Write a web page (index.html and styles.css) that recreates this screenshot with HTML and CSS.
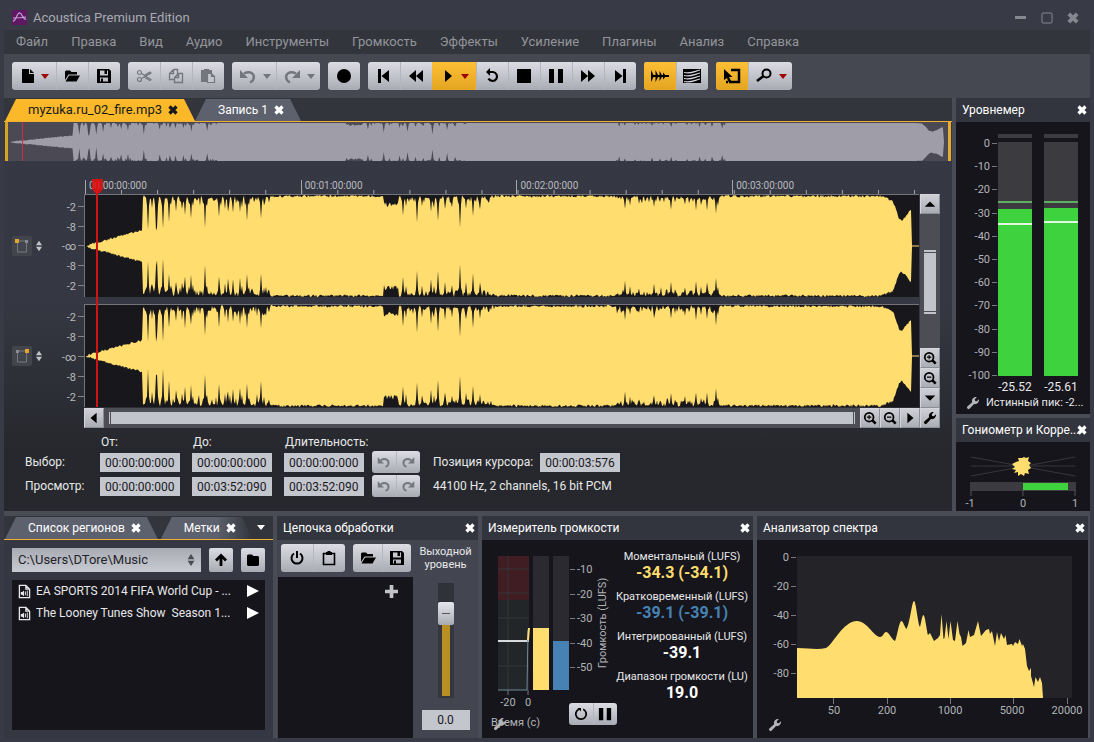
FILE: index.html
```
<!DOCTYPE html>
<html lang="ru">
<head>
  <meta charset="UTF-8">
  <meta name="viewport" content="width=device-width, initial-scale=1.0">
  <title>Acoustica Premium Edition</title>
  <link rel="stylesheet" href="styles.css">
</head>
<body>
  <svg class="sprite" aria-hidden="true">
    <symbol id="i-close" viewBox="0 0 10 10"><path d="M1.5 1.5l7 7M8.500 1.500l-7 7" stroke="currentColor" stroke-width="3.2"/></symbol>
    <symbol id="i-new" viewBox="0 0 16 16"><path d="M2 1h7v5h5v9H2zM10 1l4 4h-4z"/></symbol>
    <symbol id="i-open" viewBox="0 0 16 16"><path d="M1 12V3.500L2 2.500h4l1.500 1.500h5.500v2.500H4.500zM1.500 13.500L5 7.500h11l-3.500 6z"/></symbol>
    <symbol id="i-save" viewBox="0 0 16 16"><path fill-rule="evenodd" d="M1 1h12l2 2v12H1zM4 2.500v5h8v-5h-1V6H8.500V2.500zM4 9.500v4h8v-4z"/><path d="M5 10.500h2v4H5z"/></symbol>
    <symbol id="i-cut" viewBox="0 0 16 16"><g fill="none" stroke="currentColor" stroke-width="1.200"><circle cx="3.500" cy="4.500" r="2"/><circle cx="3.500" cy="11.500" r="2"/><path d="M5.500 5.500l3 1.800L14 4l1 1-9.500 5.500M8 9l6 3.500 1-1-5-3"/></g></symbol>
    <symbol id="i-copy" viewBox="0 0 16 16"><g fill="none" stroke="currentColor" stroke-width="1.300"><path d="M5.500 1.500h4v5M5.500 1.500l-4 4v6h5M5.500 1.500v4h-4M10.500 5.500h4v9h-8v-5zM10.500 5.500v4h-4"/></g></symbol>
    <symbol id="i-paste" viewBox="0 0 16 16"><path d="M1 2h3V1h5v1h3v3H7v9H1z"/><path d="M7.500 5.500h4l3 3v6h-7zM11.500 5.500v3h3" fill="#c3c5cd" stroke="currentColor" stroke-width="1.200"/></symbol>
    <symbol id="i-undo" viewBox="0 0 18 16"><path d="M5 5.500c6-3 12 0 9 6.500-.5 1-1.500 1.800-3 2.300" fill="none" stroke="currentColor" stroke-width="2.500"/><path d="M1 2v8h8z"/></symbol>
    <symbol id="i-redo" viewBox="0 0 18 16"><path d="M13 5.500c-6-3-12 0-9 6.500.5 1 1.500 1.800 3 2.300" fill="none" stroke="currentColor" stroke-width="2.500"/><path d="M17 2v8H9z"/></symbol>
    <symbol id="i-record" viewBox="0 0 16 16"><circle cx="8" cy="8" r="7"/></symbol>
    <symbol id="i-start" viewBox="0 0 16 16"><path d="M2 1h3v14H2zM13 2v12L5.500 8z"/></symbol>
    <symbol id="i-rew" viewBox="0 0 16 16"><path d="M8 2v12L1 8zM15 2v12L8 8z"/></symbol>
    <symbol id="i-play" viewBox="0 0 16 16"><path d="M5 2l7 6-7 6z"/></symbol>
    <symbol id="i-loop" viewBox="0 0 16 16"><path d="M4 4h5a4.500 4.500 0 1 1-4.500 6.500" fill="none" stroke="currentColor" stroke-width="2.200"/><path d="M6 0v8L2 4z"/></symbol>
    <symbol id="i-stop" viewBox="0 0 16 16"><path d="M1 1h14v14H1z"/></symbol>
    <symbol id="i-pause" viewBox="0 0 16 16"><path d="M1 1h5v14H1zM10 1h5v14h-5z"/></symbol>
    <symbol id="i-fwd" viewBox="0 0 16 16"><path d="M1 2v12l7-6zM8 2v12l7-6z"/></symbol>
    <symbol id="i-end" viewBox="0 0 16 16"><path d="M11 1h3v14h-3zM3 2v12l7.500-6z"/></symbol>
    <symbol id="i-wave" viewBox="0 0 20 16"><path d="M1 7h18v2H1zM1 2l3 6-3 6zM5.500 2l3 6-3 6zM9.500 3l3 5-3 5zM13 4.500L16 8l-3 3.500z"/></symbol>
    <symbol id="i-spectro" viewBox="0 0 20 16"><path d="M1 1h18v14H1z"/><path d="M2 4.500c7 1.500 10-1 16-2.500M2 7.500c7 1.500 10-1 16-2.500M2 10.500c7 1.500 10-1 16-2.500M2 13.500c7 1.500 10-1 16-2.500" fill="none" stroke="#d3d4da" stroke-width="1.100"/></symbol>
    <symbol id="i-select" viewBox="0 0 18 16"><path d="M8 2h8v12H6M3 14h2" fill="none" stroke="currentColor" stroke-width="2.500"/><path d="M1 1l8.500 8H6l2 4-2.500 1-1.500-4-3 2z"/></symbol>
    <symbol id="i-zoom" viewBox="0 0 18 16"><circle cx="11.500" cy="5.500" r="4" fill="none" stroke="currentColor" stroke-width="2"/><path d="M8.500 8L2 13" stroke="currentColor" stroke-width="2.600"/></symbol>
    <symbol id="i-zin" viewBox="0 0 16 16"><circle cx="7" cy="7" r="5" fill="none" stroke="currentColor" stroke-width="2"/><path d="M4.500 7h5M7 4.500v5" stroke="currentColor" stroke-width="1.200"/><path d="M10.500 10.500l4 4" stroke="currentColor" stroke-width="3"/></symbol>
    <symbol id="i-zout" viewBox="0 0 16 16"><circle cx="7" cy="7" r="5" fill="none" stroke="currentColor" stroke-width="2"/><path d="M4.500 7h5" stroke="currentColor" stroke-width="1.400"/><path d="M10.500 10.500l4 4" stroke="currentColor" stroke-width="3"/></symbol>
    <symbol id="i-up" viewBox="0 0 16 16"><path d="M2 11l6-6 6 6z"/></symbol>
    <symbol id="i-down" viewBox="0 0 16 16"><path d="M2 5l6 6 6-6z"/></symbol>
    <symbol id="i-left" viewBox="0 0 16 16"><path d="M11 2v12L4 8z"/></symbol>
    <symbol id="i-wrench" viewBox="0 0 16 16"><path d="M1.500 12L7 7C6 3.500 9 .5 12.300 1.300L10 3.600l.5 2 2 .4 2.300-2.200C15.500 7 12.500 10 9.200 9.200L4 14.600C2.500 16 .2 13.500 1.500 12z"/></symbol>
    <symbol id="i-arrow" viewBox="0 0 16 16"><path d="M8 14V4M3 8.500L8 3.500l5 5" fill="none" stroke="currentColor" stroke-width="2.800"/></symbol>
    <symbol id="i-folder" viewBox="0 0 16 16"><path d="M2 3.500L3 2.500h4L8.500 4H13l1 1v8l-1 1H3l-1-1z"/></symbol>
    <symbol id="i-power" viewBox="0 0 16 16"><path d="M5 3.500a5.500 5.500 0 1 0 6 0M8 1v7" fill="none" stroke="currentColor" stroke-width="2"/></symbol>
    <symbol id="i-clip" viewBox="0 0 16 16"><path d="M2.500 3.500h11v11h-11z" fill="none" stroke="currentColor" stroke-width="1.600"/><path d="M5 5V2h1.500V1h3v1H11v3z"/></symbol>
    <symbol id="i-audio" viewBox="0 0 14 16"><path d="M1.500 1.500h7l4 4v9h-11zM8.500 1.500v4h4" fill="none" stroke="currentColor" stroke-width="1.400"/><path d="M3 8.500h1.500L6.500 7v6l-2-1.500H3z"/><path d="M8 8v4M10 7v6" stroke="currentColor"/></symbol>
    <symbol id="i-reset" viewBox="0 0 16 16"><path d="M5.500 2.500a6 6 0 1 0 5 0" fill="none" stroke="currentColor" stroke-width="2"/><path d="M4 1h4v4z"/></symbol>
    <symbol id="i-spin" viewBox="0 0 8 14"><path d="M0 6l4-6 4 6zM0 8l4 6 4-6z"/></symbol>
  </svg>

  <div class="window">
    <header class="titlebar">
      <svg class="logo" viewBox="0 0 16 16"><rect width="16" height="16" fill="#5d1763"/><path d="M1 12C5 11 5 3 8 3s3 7 7 7M1 8.500c5 0 8 0 14-1" fill="none" stroke="#c69fd0" stroke-width="1.200"/></svg>
      <h1>Acoustica Premium Edition</h1>
      <div class="win-buttons">
        <button aria-label="Свернуть"><svg viewBox="0 0 12 12"><path d="M0 4h11v3H0z"/></svg></button>
        <button aria-label="Развернуть"><svg viewBox="0 0 12 12"><rect x="1" y="1" width="10" height="10" rx="1" fill="none" stroke="currentColor"/></svg></button>
        <button aria-label="Закрыть"><svg viewBox="0 0 12 12"><use href="#i-close"/></svg></button>
      </div>
    </header>

    <nav class="menu">
      <a href="#">Файл</a>
      <a href="#">Правка</a>
      <a href="#">Вид</a>
      <a href="#">Аудио</a>
      <a href="#">Инструменты</a>
      <a href="#">Громкость</a>
      <a href="#">Эффекты</a>
      <a href="#">Усиление</a>
      <a href="#">Плагины</a>
      <a href="#">Анализ</a>
      <a href="#">Справка</a>
    </nav>

    <div class="toolbar">
      <div class="group">
        <button class="drop" aria-label="Новый"><svg class="icon"><use href="#i-new"/></svg><i class="caret"></i></button>
        <button aria-label="Открыть"><svg class="icon"><use href="#i-open"/></svg></button>
        <button aria-label="Сохранить"><svg class="icon"><use href="#i-save"/></svg></button>
      </div>
      <div class="group dim">
        <button aria-label="Вырезать"><svg class="icon"><use href="#i-cut"/></svg></button>
        <button aria-label="Копировать"><svg class="icon"><use href="#i-copy"/></svg></button>
        <button aria-label="Вставить"><svg class="icon"><use href="#i-paste"/></svg></button>
      </div>
      <div class="group dim">
        <button class="drop" aria-label="Отменить"><svg class="icon wide"><use href="#i-undo"/></svg><i class="caret"></i></button>
        <button class="drop" aria-label="Повторить"><svg class="icon wide"><use href="#i-redo"/></svg><i class="caret"></i></button>
      </div>
      <div class="group">
        <button aria-label="Запись"><svg class="icon"><use href="#i-record"/></svg></button>
      </div>
      <div class="group">
        <button aria-label="В начало"><svg class="icon"><use href="#i-start"/></svg></button>
        <button aria-label="Назад"><svg class="icon"><use href="#i-rew"/></svg></button>
        <button class="drop on" aria-label="Воспроизвести"><svg class="icon"><use href="#i-play"/></svg><i class="caret"></i></button>
        <button aria-label="Повтор"><svg class="icon"><use href="#i-loop"/></svg></button>
        <button aria-label="Стоп"><svg class="icon"><use href="#i-stop"/></svg></button>
        <button aria-label="Пауза"><svg class="icon"><use href="#i-pause"/></svg></button>
        <button aria-label="Вперёд"><svg class="icon"><use href="#i-fwd"/></svg></button>
        <button aria-label="В конец"><svg class="icon"><use href="#i-end"/></svg></button>
      </div>
      <div class="group">
        <button class="on" aria-label="Волна"><svg class="icon wide"><use href="#i-wave"/></svg></button>
        <button aria-label="Спектр"><svg class="icon wide"><use href="#i-spectro"/></svg></button>
      </div>
      <div class="group">
        <button class="on" aria-label="Выделение"><svg class="icon wide"><use href="#i-select"/></svg></button>
        <button class="drop" aria-label="Масштаб"><svg class="icon wide"><use href="#i-zoom"/></svg><i class="caret"></i></button>
      </div>
    </div>

    <main class="workspace">
      <section class="editor">
        <div class="tabs file-tabs">
          <div class="tab active"><button>myzuka.ru_02_fire.mp3</button><button class="close" aria-label="Закрыть"><svg><use href="#i-close"/></svg></button></div>
          <div class="tab"><button>Запись 1</button><button class="close" aria-label="Закрыть"><svg><use href="#i-close"/></svg></button></div>
        </div>

        <div class="overview">
          <svg class="wave" viewBox="0 0 827 40" preserveAspectRatio="none"></svg>
          <span class="overview-cursor"></span>
        </div>

        <div class="timeline">
          <div class="ruler">
            <svg class="ticks" viewBox="0 0 835 14" preserveAspectRatio="none"></svg>
            <span>00:00:00:000</span>
            <span>00:01:00:000</span>
            <span>00:02:00:000</span>
            <span>00:03:00:000</span>
          </div>

          <div class="track-side first">
            <svg class="chan" viewBox="0 0 20 20"><path d="M5.500 5v11h9V5z" fill="none" stroke="#77787e"/><path d="M3 3h4v4H3z" fill="#e0a52c"/><path d="M13 4h3v3h-3z" fill="#8a8b90"/></svg>
            <svg class="spin"><use href="#i-spin"/></svg>
            <div class="scale"><span>-2</span><span>-8</span><span>-∞</span><span>-8</span><span>-2</span></div>
          </div>
          <div class="track first"><svg class="wave" viewBox="0 0 834 102" preserveAspectRatio="none"></svg></div>

          <div class="track-side second">
            <svg class="chan" viewBox="0 0 20 20"><path d="M5.500 5v11h9V5z" fill="none" stroke="#77787e"/><path d="M13 3h4v4h-4z" fill="#e0a52c"/><path d="M4 4h3v3H4z" fill="#8a8b90"/></svg>
            <svg class="spin"><use href="#i-spin"/></svg>
            <div class="scale"><span>-2</span><span>-8</span><span>-∞</span><span>-8</span><span>-2</span></div>
          </div>
          <div class="track second"><svg class="wave" viewBox="0 0 834 102" preserveAspectRatio="none"></svg></div>

          <div class="playhead"><svg viewBox="0 0 11 14"><path d="M0 0h11v10l-3 4H3l-3-4z"/></svg></div>

          <div class="vscroll">
            <button aria-label="Вверх"><svg><use href="#i-up"/></svg></button>
            <div class="lane"><div class="thumb"></div></div>
            <button aria-label="Увеличить"><svg><use href="#i-zin"/></svg></button>
            <button aria-label="Уменьшить"><svg><use href="#i-zout"/></svg></button>
            <button aria-label="Вниз"><svg><use href="#i-down"/></svg></button>
          </div>
          <div class="hscroll">
            <button aria-label="Влево"><svg><use href="#i-left"/></svg></button>
            <div class="lane"><div class="thumb"></div></div>
            <button aria-label="Увеличить"><svg><use href="#i-zin"/></svg></button>
            <button aria-label="Уменьшить"><svg><use href="#i-zout"/></svg></button>
            <button aria-label="Вправо"><svg><use href="#i-play"/></svg></button>
            <button aria-label="Настройки"><svg><use href="#i-wrench"/></svg></button>
          </div>
        </div>

        <div class="range">
          <span></span><span>От:</span><span>До:</span><span>Длительность:</span><span></span><span></span>

          <label for="selFrom">Выбор:</label>
          <input id="selFrom" value="00:00:00:000">
          <input aria-label="Выбор до" value="00:00:00:000">
          <input aria-label="Длительность выбора" value="00:00:00:000">
          <div class="group small dim">
            <button aria-label="Отменить"><svg class="icon"><use href="#i-undo"/></svg></button>
            <button aria-label="Повторить"><svg class="icon"><use href="#i-redo"/></svg></button>
          </div>
          <div class="position"><label for="cursorPos">Позиция курсора:</label><input id="cursorPos" value="00:00:03:576"></div>

          <label for="viewFrom">Просмотр:</label>
          <input id="viewFrom" value="00:00:00:000">
          <input aria-label="Просмотр до" value="00:03:52:090">
          <input aria-label="Длительность просмотра" value="00:03:52:090">
          <div class="group small dim">
            <button aria-label="Отменить"><svg class="icon"><use href="#i-undo"/></svg></button>
            <button aria-label="Повторить"><svg class="icon"><use href="#i-redo"/></svg></button>
          </div>
          <div class="position">44100 Hz, 2 channels, 16 bit PCM</div>
        </div>
      </section>

      <aside class="side">
        <section class="panel levels">
          <header><h2>Уровнемер</h2><button class="close" aria-label="Закрыть"><svg><use href="#i-close"/></svg></button></header>
          <svg class="chart" id="levels" viewBox="0 0 134 274">
            <g fill="#3b3b40"><path d="M42 12h34v4H42zM88 12h34v4H88zM42 20h34v68H42zM88 20h34v67H88z"/></g>
            <g fill="#3fd23f"><path d="M42 87h34v167H42zM88 86h34v168H88z"/></g>
            <path d="M42 79h34v2H42zM88 79h34v2H88z" fill="#5fae62"/>
            <path d="M42 101h34v2H42zM88 99h34v2H88z" fill="#e0f7df"/>
            <text class="num" x="59" y="269" text-anchor="middle">-25.52</text>
            <text class="num" x="105" y="269" text-anchor="middle">-25.61</text>
          </svg>
          <footer><button class="tool" aria-label="Настройки"><svg><use href="#i-wrench"/></svg></button><span>Истинный пик: -2...</span></footer>
        </section>

        <section class="panel gonio">
          <header><h2>Гониометр и Корре...</h2><button class="close" aria-label="Закрыть"><svg><use href="#i-close"/></svg></button></header>
          <svg class="chart" viewBox="0 0 134 69">
            <path d="M15 15l104 19M15 34L119 15M15 24h104" stroke="#37373d"/>
            <path d="M60 20l3-1-1-3 4 0 2-1 2 1 3-1-1 4 3 2-2 2 2 3-3 2 1 4-4-1-1 3-3-2-3 2 0-4-4 1 2-3-4-1 3-2-3-3z" fill="#ffdd6e"/>
            <path d="M14 40h106v9H14z" fill="#3b3b40"/>
            <path d="M67 41h45v7H67z" fill="#3fd23f"/>
            <path d="M15 48v6M67 48v6M119 48v6" stroke="#55565c"/>
            <g text-anchor="middle"><text x="14" y="65">-1</text><text x="67" y="65">0</text><text x="119" y="65">1</text></g>
          </svg>
        </section>
      </aside>
    </main>

    <div class="bottom">
      <section class="regions">
        <div class="tabs">
          <div class="tab"><button>Список регионов</button><button class="close" aria-label="Закрыть"><svg><use href="#i-close"/></svg></button></div>
          <div class="tab fade"><button>Метки</button><button class="close" aria-label="Закрыть"><svg><use href="#i-close"/></svg></button></div>
          <button class="more" aria-label="Ещё"><i class="caret"></i></button>
        </div>
        <div class="path-row">
          <div class="picker">
            <select aria-label="Папка"><option>C:\Users\DTore\Music</option></select>
            <svg><use href="#i-spin"/></svg>
          </div>
          <button aria-label="Вверх"><svg class="icon"><use href="#i-arrow"/></svg></button>
          <button aria-label="Папка"><svg class="icon"><use href="#i-folder"/></svg></button>
        </div>
        <ul class="files">
          <li><svg class="note"><use href="#i-audio"/></svg><span>EA SPORTS 2014 FIFA World Cup - ...</span><button aria-label="Воспроизвести"></button></li>
          <li><svg class="note"><use href="#i-audio"/></svg><span>The Looney Tunes Show  Season 1...</span><button aria-label="Воспроизвести"></button></li>
        </ul>
      </section>

      <section class="panel chain">
        <header><h2>Цепочка обработки</h2><button class="close" aria-label="Закрыть"><svg><use href="#i-close"/></svg></button></header>
        <div class="chain-body">
          <div class="chain-main">
            <div class="chain-tools">
              <div class="group">
                <button aria-label="Включить"><svg class="icon"><use href="#i-power"/></svg></button>
                <button aria-label="Буфер"><svg class="icon"><use href="#i-clip"/></svg></button>
              </div>
              <div class="group narrow">
                <button aria-label="Открыть"><svg class="icon"><use href="#i-open"/></svg></button>
                <button aria-label="Сохранить"><svg class="icon"><use href="#i-save"/></svg></button>
              </div>
            </div>
            <div class="slots"><button aria-label="Добавить"><svg viewBox="0 0 14 14"><path d="M5 0h4v5h5v4H9v5H5V9H0V5h5z"/></svg></button></div>
          </div>
          <div class="output">
            <label for="outLevel">Выходной уровень</label>
            <input type="range" id="outLevel" min="0" max="100" value="79">
            <input class="value" aria-label="Уровень" value="0.0">
          </div>
        </div>
      </section>

      <section class="panel loudness">
        <header><h2>Измеритель громкости</h2><button class="close" aria-label="Закрыть"><svg><use href="#i-close"/></svg></button></header>
        <div class="loud-body">
          <div class="loud-graph">
            <svg class="chart" id="loud" viewBox="0 0 134 198">
              <path d="M16 16h31v134H16z" fill="#232629"/>
              <path d="M16 16h31v44H16z" fill="#3f1d22"/>
              <path d="M16 29h31M16 53h31M16 78h31M16 126h31M26 16v134" stroke="#34353a"/>
              <path d="M16 101h31" stroke="#d9dadd" stroke-width="2"/>
              <path d="M16 150h29l1-60" fill="none" stroke="#6d8a99"/>
              <path d="M46 100l1-12" stroke="#ffdd6e" stroke-width="2"/>
              <path d="M51 16h16v134H51zM71 16h16v134H71z" fill="#2c2a31"/>
              <path d="M51 88h16v62H51z" fill="#ffdd6e"/>
              <path d="M71 101h16v49H71z" fill="#4682b4"/>
              <path d="M26 150v5M46 150v5" stroke="#77787e"/>
              <g text-anchor="middle"><text x="26" y="166">-20</text><text x="46" y="166">0</text></g>
              <text transform="translate(124 83) rotate(-90)" text-anchor="middle">Громкость (LUFS)</text>
              <text x="9" y="186">Время (c)</text>
            </svg>
            <button class="tool" aria-label="Настройки"><svg><use href="#i-wrench"/></svg></button>
          </div>
          <dl>
            <dt>Моментальный (LUFS)</dt><dd class="yellow">-34.3 (-34.1)</dd>
            <dt>Кратковременный (LUFS)</dt><dd class="blue">-39.1 (-39.1)</dd>
            <dt>Интегрированный (LUFS)</dt><dd>-39.1</dd>
            <dt>Диапазон громкости (LU)</dt><dd>19.0</dd>
          </dl>
          <div class="group small loud-buttons">
            <button aria-label="Сброс"><svg class="icon"><use href="#i-reset"/></svg></button>
            <button aria-label="Пауза"><svg class="icon"><use href="#i-pause"/></svg></button>
          </div>
        </div>
      </section>

      <section class="panel spectrum">
        <header><h2>Анализатор спектра</h2><button class="close" aria-label="Закрыть"><svg><use href="#i-close"/></svg></button></header>
        <svg class="chart" id="spectrum" viewBox="0 0 331 198">
          <path d="M40 16h275v142H40z" fill="#232328"/>
          <path fill="#ffdd6e" d="M40 108C52 108 60 110 69 108C75 106 86 81 100 81C110 81 117 97 123 97C126 97 127 92 129 92C132 92 135 100 138 101C140 98 142 81 144.500 81C146 81 148 88 149.500 89C153 83 155 61 157 61C159 61 161 86 163 87C164 84 165 75 166.500 75C168 75 170 92 171 95L173 93L177 101L181 98L183 95L184.500 74L186.500 99L187.500 98L189.500 81L191.500 99L193.500 81L196 100L198 101L200.500 81L202.500 94L204 97L205.500 106L209 103L211.500 90L213 97L217 95L221 81L224 96L229 90L232 89L233 94L235 91L238 106L240 92L242 101L244 93L247 99L248.500 95L250 105L255 104L256 106L258 102L261 104L262.500 99L265 106L266 104L268 109L270 126L272 131L274 128V136L277 147L278.500 137L281 142L283 137L285 143L286 158H40z"/>
          <g stroke="#77787e"><path d="M76.500 158v6M130.500 158v6M193.500 158v6M256.500 158v6M310.500 158v6"/></g>
          <g text-anchor="middle"><text x="77" y="174">50</text><text x="130" y="174">200</text><text x="193" y="174">1000</text><text x="255" y="174">5000</text><text x="310" y="174">20000</text></g>
        </svg>
        <button class="tool" aria-label="Настройки"><svg><use href="#i-wrench"/></svg></button>
      </section>
    </div>
  </div>

  <script src="script.js"></script>
</body>
</html>
```
FILE: styles.css
```
* {
  box-sizing: border-box;
}

body {
  margin: 0;
  background: #31333d;
  color: #e8e8ea;
  font: 12px/16px Roboto, "Liberation Sans", sans-serif;
}

h1, h2, dl, dd, ul {
  margin: 0;
  padding: 0;
  font-weight: normal;
}

button {
  padding: 0;
  border: none;
  background: none;
  color: inherit;
  font: inherit;
  white-space: nowrap;
  cursor: pointer;
}

svg {
  display: block;
  fill: currentColor;
}

.sprite {
  display: none;
}

.window {
  display: flex;
  flex-direction: column;
  min-height: 100vh;
  padding: 0 4px 4px;
  background: #383a46;
}

/* title and menu */
.titlebar {
  display: flex;
  align-items: center;
  gap: 6px;
  height: 30px;
  padding: 5px 11px 0 8px;
  color: #a9aab1;
}

.titlebar h1 {
  font-size: 13px;
}

.logo {
  width: 15px;
  height: 15px;
}

.win-buttons {
  display: flex;
  gap: 14px;
  margin-left: auto;
  color: #85868f;
}

.win-buttons svg {
  width: 12px;
  height: 12px;
}

.menu {
  display: flex;
  gap: 23px;
  height: 24px;
  padding: 0 12px;
  background: #32353c;
  font-size: 13px;
  line-height: 24px;
}

.menu a {
  color: #94959b;
  text-decoration: none;
}

/* toolbar */
.toolbar {
  display: flex;
  gap: 8px;
  height: 44px;
  padding: 8px;
  background: #454851;
}

.group {
  display: flex;
  height: 28px;
  border-radius: 3px;
  overflow: hidden;
  background: linear-gradient(#dcdde3, #a9abb4);
  color: #000;
}

.group button {
  display: flex;
  flex: none;
  align-items: center;
  justify-content: center;
  width: 32px;
}

.group button + button {
  box-shadow: inset 1px 0 #b4b6be;
}

.group .drop {
  width: 44px;
  gap: 5px;
}

.group button.on {
  background: linear-gradient(#fcbf35, #e4a521);
  box-shadow: none;
}

.dim {
  color: #74767d;
}

.icon {
  width: 16px;
  height: 16px;
}

.icon.wide {
  width: 20px;
}

.caret {
  border: 4px solid transparent;
  border-top: 5px solid #a00000;
  border-bottom: none;
}

.dim .caret {
  border-top-color: #74767d;
}

.group.small {
  height: 22px;
}

.group.small button {
  width: 24px;
}

.group.small .icon {
  width: 14px;
  height: 14px;
}

/* tabs */
.tabs {
  display: flex;
  gap: 3px;
  height: 24px;
  padding-left: 1px;
  border-bottom: 1px solid #f0b030;
  background: #32353c;
}

.tab {
  display: flex;
  flex: none;
  align-items: center;
  gap: 6px;
  height: 22px;
  margin-top: 1px;
  padding: 0 17px 0 23px;
  background: #5d616d;
  color: #fff;
  clip-path: polygon(11px 0, calc(100% - 11px) 0, 100% 100%, 0 100%);
}

.tab.active {
  background: #fbb829;
  color: #17181c;
  font-size: 13px;
}

.tab.fade {
  background: linear-gradient(to right, #5d616d 60%, #32353c);
}

.close {
  flex: none;
}

.close svg {
  width: 10px;
  height: 10px;
}

/* editor */
.workspace {
  display: flex;
  gap: 4px;
  padding-bottom: 5px;
  background: #494c55;
}

.editor {
  flex: 1;
  min-width: 0;
  background: linear-gradient(#363944 0, #353842 50%, #26282d 85%);
}

.file-tabs {
  gap: 0;
}

.overview {
  position: relative;
  height: 39px;
  padding: 1px 4px 0 0;
  border-left: 3px solid #d9a520;
  border-right: 3px solid #e6ae2c;
  margin: 0 1px;
  background: #4a4954;
  color: #9f9ea8;
}

.wave {
  width: 100%;
  height: 100%;
}

.overview-cursor {
  position: absolute;
  top: 0;
  bottom: 0;
  left: 14px;
  width: 1px;
  background: #d22a44;
}

.timeline {
  position: relative;
  display: grid;
  grid-template-columns: 80px 1fr 20px;
  grid-template-rows: 33px 103px 7px 104px 20px;
  padding-right: 12px;
}

.ruler {
  position: relative;
  grid-area: 1 / 2;
  display: grid;
  grid-template-columns: 216fr 216fr 216fr 188fr;
  align-items: end;
  padding-left: 1px;
}

.ruler span {
  height: 14px;
  padding-left: 3px;
  border-left: 1px solid #a5a6aa;
  color: #b9babf;
  font-size: 10px;
  line-height: 12px;
}

.ticks {
  position: absolute;
  left: 0;
  bottom: 0;
  width: 100%;
  height: 14px;
}

.track-side {
  display: flex;
  align-items: center;
  padding-left: 8px;
}

.track-side.first {
  grid-area: 2 / 1;
}

.track-side.second {
  grid-area: 4 / 1;
}

.chan {
  width: 20px;
  height: 20px;
  border-radius: 2px;
  background: #43454d;
}

.spin {
  width: 6px;
  height: 12px;
  margin-left: 4px;
  color: #c3c4c8;
}

.scale {
  display: flex;
  flex: 1;
  flex-direction: column;
  justify-content: space-around;
  height: 100%;
  padding-top: 4px;
  color: #b9babf;
  font-size: 11px;
  text-align: right;
}

.scale span::after {
  content: "";
  display: inline-block;
  width: 6px;
  height: 1px;
  margin-left: 2px;
  background: #808187;
  vertical-align: 4px;
}

.track {
  height: 103px;
  border-top: 1px solid #73747a;
  border-left: 1px solid #73747a;
  margin-right: 1px;
  background: #17171c;
  color: #ffdd6e;
}

.track.first {
  grid-area: 2 / 2;
}

.track.second {
  grid-area: 4 / 2;
}

.playhead {
  position: absolute;
  z-index: 2;
  top: 18px;
  left: 92px;
  height: 228px;
  border-left: 2px solid #d01412;
  color: #e3110f;
}

.playhead svg {
  width: 11px;
  height: 14px;
  margin-left: -6px;
  opacity: 0.85;
}

.vscroll {
  grid-area: 2 / 3 / 5 / 4;
  display: flex;
  flex-direction: column;
  background: #4d4e55;
}

.hscroll {
  grid-area: 5 / 2 / 6 / 4;
  display: flex;
  background: #4d4e55;
}

.vscroll button,
.hscroll button {
  display: grid;
  place-items: center;
  flex: none;
  width: 20px;
  height: 20px;
  border: 1px solid #8c8e95;
  border-top-color: #d5d6db;
  border-left-color: #d5d6db;
  background: linear-gradient(#cfd0d6, #abadb5);
  color: #000;
}

.vscroll button svg,
.hscroll button svg {
  width: 14px;
  height: 14px;
}

.lane {
  display: flex;
  flex: 1;
}

.vscroll .lane {
  flex-direction: column;
  padding: 35px 4px 33px;
}

.hscroll .lane {
  padding: 4px;
}

.thumb {
  flex: 1;
  background: #c2c4cb;
}

.vscroll .thumb {
  border-top: 4px double #4d4e55;
  border-bottom: 4px double #4d4e55;
}

.hscroll .thumb {
  border-left: 3px double #4d4e55;
  border-right: 3px double #4d4e55;
}

.range {
  display: grid;
  grid-template-columns: 63px 80px 80px 80px 48px auto;
  grid-template-rows: 20px 20px 20px;
  align-items: center;
  justify-content: start;
  gap: 4px 12px;
  padding: 0 0 15px 21px;
}

.range > span {
  align-self: end;
  padding-left: 1px;
  line-height: 12px;
  white-space: nowrap;
}

.range .group {
  width: 48px;
  margin-left: -4px;
}

input {
  width: 80px;
  height: 19px;
  padding: 2px 5px 0;
  border: none;
  background: #c4c6ce;
  color: #17181c;
  font: inherit;
}

.position {
  display: flex;
  align-items: center;
  gap: 7px;
  margin-left: -3px;
}

/* side panels */
.side {
  display: flex;
  flex: none;
  flex-direction: column;
  gap: 4px;
  width: 134px;
}

.panel {
  display: flex;
  flex-direction: column;
  min-width: 0;
  background: #15151b;
}

.panel header {
  display: flex;
  align-items: center;
  justify-content: space-between;
  height: 24px;
  padding: 0 3px 0 6px;
  background: #32353d;
  color: #fff;
  white-space: nowrap;
}

.panel h2 {
  min-width: 0;
  font-size: 12px;
}

.levels {
  height: 316px;
}

.gonio {
  flex: 1;
}

.chart {
  width: 100%;
  fill: #b3b4b8;
  font-size: 11px;
}

.chart .num {
  fill: #e8e8ea;
  font-size: 12px;
}

.levels footer {
  display: flex;
  gap: 6px;
  padding-left: 10px;
  margin-top: -1px;
  font-size: 11px;
  white-space: nowrap;
}

.tool {
  color: #b3b4b8;
}

.tool svg {
  width: 14px;
  height: 14px;
}

/* bottom row */
.bottom {
  display: grid;
  flex: 1;
  grid-template-columns: 269fr 201fr 271fr 331fr;
  gap: 4px;
  padding-right: 2px;
  background: #494c55;
}

.regions {
  display: flex;
  flex-direction: column;
  min-width: 0;
  padding-bottom: 8px;
  background: #353843;
}

.more {
  margin: 0 8px 0 auto;
}

.more .caret {
  display: block;
  border-top-color: #fff;
}

.path-row {
  display: flex;
  gap: 8px;
  padding: 8px;
}

.path-row button {
  display: grid;
  place-items: center;
  width: 24px;
  height: 24px;
  border-radius: 2px;
  background: linear-gradient(#dcdde3, #a9abb4);
  color: #000;
}

.picker {
  position: relative;
  flex: 1;
}

.picker select {
  width: 100%;
  height: 24px;
  padding: 0 6px;
  border: none;
  border-radius: 0;
  appearance: none;
  background: linear-gradient(#a9abb4, #c9cbd2);
  color: #222328;
  font: inherit;
  font-size: 13px;
}

.picker svg {
  position: absolute;
  top: 6px;
  right: 6px;
  width: 8px;
  height: 12px;
  color: #4a4b51;
}

.files {
  flex: 1;
  margin: 0 8px;
  background: #15151b;
  list-style: none;
}

.files li {
  display: flex;
  align-items: center;
  gap: 5px;
  height: 22px;
  padding: 0 6px;
  white-space: pre;
}

.files span {
  flex: 1;
}

.files .note {
  width: 13px;
  height: 15px;
}

.files button {
  border: 6px solid transparent;
  border-left: 12px solid #fff;
  border-right: none;
}

.chain-body {
  display: flex;
  flex: 1;
  background: #434651;
}

.chain-main {
  display: flex;
  flex: 1;
  flex-direction: column;
}

.chain-tools {
  display: flex;
  gap: 8px;
  padding: 4px 0 5px 4px;
}

.narrow button {
  width: 29px;
}

.slots {
  flex: 1;
  padding: 8px 15px;
  margin-left: 1px;
  background: #15151b;
}

.slots button {
  display: block;
  margin-left: auto;
  color: #c3c4c8;
}

.slots svg {
  width: 13px;
  height: 13px;
}

.output {
  display: flex;
  flex: none;
  flex-direction: column;
  align-items: center;
  width: 65px;
  padding-top: 5px;
  text-align: center;
  line-height: 13px;
}

.output label {
  width: 54px;
  font-size: 11px;
}

.output input[type="range"] {
  appearance: none;
  width: 16px;
  height: 115px;
  padding: 0;
  margin: 12px 0;
  background: linear-gradient(to right, #35373f 4px, #b98f24 4px 12px, #35373f 12px);
  writing-mode: vertical-lr;
  direction: rtl;
}

.output input[type="range"]::-webkit-slider-runnable-track {
  background: linear-gradient(#30323a 25px, transparent 25px calc(100% - 2px), #35373f calc(100% - 2px));
}

.output input[type="range"]::-webkit-slider-thumb {
  appearance: none;
  width: 16px;
  height: 23px;
  border-radius: 2px;
  background: linear-gradient(transparent 11px, #55565c 11px 12px, transparent 12px) center / 8px 23px no-repeat, linear-gradient(#e6e7ec, #a9abb4);
}

.output .value {
  width: 48px;
  height: 20px;
  padding: 0;
  text-align: center;
}

.loud-body {
  position: relative;
  display: flex;
  flex: 1;
}

.loud-graph {
  position: relative;
  flex: none;
  width: 134px;
}

.loud-graph .tool {
  position: absolute;
  bottom: 7px;
  left: 11px;
}

.loud-body dl {
  flex: 1;
  padding: 9px 6px 0 0;
  font-size: 11px;
  text-align: center;
  white-space: nowrap;
}

.loud-body dd {
  height: 24px;
  color: #fff;
  font-size: 16px;
  font-weight: bold;
}

.loud-body .yellow {
  color: #ffdd6e;
}

.loud-body .blue {
  color: #4682b4;
}

.loud-buttons {
  position: absolute;
  bottom: 13px;
  left: 87px;
}

.spectrum {
  position: relative;
}

.spectrum .tool {
  position: absolute;
  bottom: 6px;
  left: 11px;
}
```
FILE: script.js
```
const SVG = 'http://www.w3.org/2000/svg';

// dips cut into the envelope: [x, depth in px of a 102px track]
const dips = [
  [63, 35], [67, 14], [71, 34], [72, 34], [78, 36], [84, 25], [91, 16], [97, 14], [100, 22], [106, 22],
  [108, 12], [120, 30], [122, 12], [134, 22], [140, 14], [143, 17], [148, 18], [155, 18], [157, 12],
  [162, 24], [164, 10], [176, 25], [179, 10], [184, 8], [318, 22], [321, 12], [332, 26], [337, 12],
  [346, 18], [349, 12], [353, 28], [360, 14], [367, 12], [375, 32], [381, 14], [388, 22], [395, 14],
  [403, 6], [540, 15], [545, 10], [554, 8], [569, 13], [586, 14], [590, 8], [600, 10], [611, 15],
  [616, 10], [622, 15], [631, 20], [633, 10]
];

function envelope(x, rand) {
  if (x < 2) return 0;
  if (x < 58) return (x - 2) / 56 * 15 + rand() * 2;
  let top = rand() * 2.5;
  if (x < 185) top += rand() * rand() * 12;
  if (x >= 299 && x <= 313) top = 7 + rand() * 5;
  if (x > 315 && x < 410) top += rand() * rand() * 8;
  if (x > 530 && x < 635) top += rand() * rand() * 8;
  dips.forEach(([dx, depth]) => {
    if (Math.abs(dx - x) < 1) top = depth * (0.9 + rand() * 0.2);
    else if (Math.abs(dx - x) < 2) top = Math.max(top, depth * 0.3);
  });
  if (x > 796) top += (x - 796) * 0.4;
  if (x > 808) top += Math.min((x - 808) * 2.5, 16);
  if (x > 817) top -= (x - 817) * 1.6;
  if (x > 826) return 0.5;
  return 51 - top;
}

function drawWave(svg, height, gain, seed) {
  let s = seed;
  const rand = () => (s = (s * 16807) % 2147483647) / 2147483647;
  const mid = height / 2;
  const amp = x => Math.min(mid, envelope(x, rand) * mid / 51 * gain);
  const top = [];
  const low = [];
  for (let x = 0; x <= 834; x++) {
    top.push(`${x},${(mid - amp(x)).toFixed(1)}`);
    low.unshift(`${x},${(mid + amp(x)).toFixed(1)}`);
  }
  const shape = document.createElementNS(SVG, 'polygon');
  shape.setAttribute('points', top.concat(low).join(' '));
  svg.appendChild(shape);
}

document.querySelectorAll('.track .wave').forEach((svg, i) => drawWave(svg, 102, 1, 77 + i * 13));
drawWave(document.querySelector('.overview .wave'), 40, 1.1, 77);

// minor ruler marks
let marks = '';
for (let x = 1.5; x < 835; x += 36) marks += `M${x} 10v4`;
const ticks = document.createElementNS(SVG, 'path');
ticks.setAttribute('d', marks);
ticks.setAttribute('stroke', '#a5a6aa');
document.querySelector('.ticks').appendChild(ticks);

// vertical scales of the meters
function drawScale(id, values, x, y, step, tickX, anchor) {
  const svg = document.getElementById(id);
  values.forEach((v, i) => {
    const cy = Math.round(y + i * step);
    const label = document.createElementNS(SVG, 'text');
    label.setAttribute('x', x);
    label.setAttribute('y', cy + 4);
    label.setAttribute('text-anchor', anchor);
    label.textContent = v;
    const tick = document.createElementNS(SVG, 'path');
    tick.setAttribute('d', `M${tickX} ${cy + 0.5}h5`);
    tick.setAttribute('stroke', '#77787e');
    svg.append(label, tick);
  });
}

drawScale('levels', [0, -10, -20, -30, -40, -50, -60, -70, -80, -90, -100], 34, 21, 23.2, 36, 'end');
drawScale('loud', [-10, -20, -30, -40, -50], 95, 29, 24.5, 88, 'start');
drawScale('spectrum', [0, -20, -40, -60, -80], 32, 17, 29, 34, 'end');
```
